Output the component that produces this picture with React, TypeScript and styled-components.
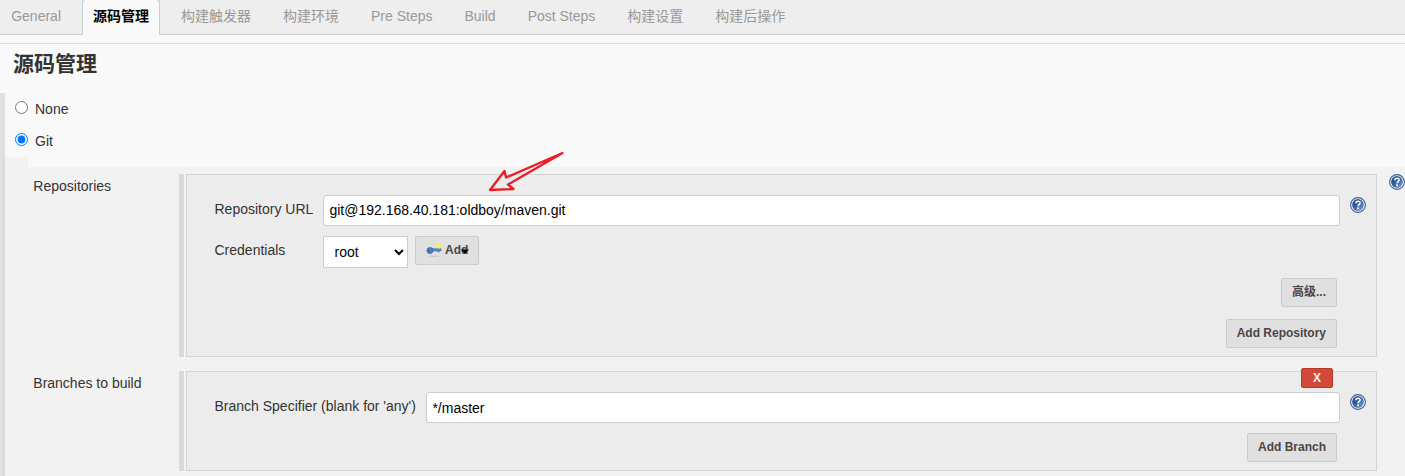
import React from "react";
import styled, { createGlobalStyle, css } from "styled-components";

const GlobalStyle = createGlobalStyle`
  *, *::before, *::after { box-sizing: border-box; }
  body {
    margin: 0;
    overflow: hidden;
    background: #f9f9f9;
    color: #333;
    font: 14px/20px "Liberation Sans", "Noto Sans CJK SC", sans-serif;
  }
`;

const Page = styled.div`
  position: relative;
  width: 1405px;
  height: 476px;
  overflow: hidden;
  display: flex;
  flex-direction: column;
`;

const TabBar = styled.nav`
  flex: none;
  display: flex;
  gap: 10px;
  height: 35px;
  padding-left: 0.2px;
  background: #eee;
  box-shadow: inset 0 -1px 0 #ccc;
`;

const Tab = styled.a<{ $active?: boolean }>`
  height: 36px;
  margin-top: -1px;
  padding: 6px 10px 0;
  border: 1px solid transparent;
  border-bottom: 0;
  border-radius: 4px 4px 0 0;
  color: #999;
  white-space: nowrap;
  ${(p) =>
    p.$active &&
    css`
      border-color: #ccc;
      background: #f9f9f9;
      color: #000;
      font-weight: bold;
    `}
`;

const Title = styled.h1`
  flex: none;
  height: 50px;
  margin: 8px 0 0;
  padding: 6px 0 0 13px;
  border-top: 1px solid #ddd;
  font-size: 21px;
  line-height: 28px;
  font-weight: bold;
`;

const Section = styled.section`
  flex: 1;
  display: flex;
  flex-direction: column;
  border-left: 5px solid #e0e0e0;
`;

const Choice = styled.label`
  display: flex;
  align-items: flex-start;
  gap: 7px;
  height: 32px;
  padding: 6px 0 0 10px;
`;

const Radio = styled.input`
  width: 13px;
  height: 13px;
  margin: 2px 0 0;
`;

const Details = styled.div`
  flex: 1;
  margin-left: -2px;
  border-left: 2px solid #d9d9d9;
  background: #f2f2f2;
`;

const Spacer = styled.div`
  height: 10px;
  margin-left: 23px;
  background: #f9f9f9;
`;

const Setting = styled.div`
  display: flex;
  align-items: flex-start;
  margin-top: 7px;
  & + & { margin-top: 14px; }
`;

const SettingName = styled.div`
  width: 174px;
  padding: 2px 0 0 28.3px;
`;

const Handle = styled.div`
  align-self: stretch;
  width: 5px;
  margin-right: 2px;
  background: #d9d9d9;
`;

const Panel = styled.div<{ $height: number }>`
  position: relative;
  width: 1191px;
  height: ${(p) => p.$height}px;
  padding: 20px 10px 0 27.5px;
  border: 1px solid #d4d4d4;
  background: #ececec;
`;

const Field = styled.div`
  display: flex;
  align-items: flex-start;
  height: 41px;
`;

const Label = styled.label<{ $width: number }>`
  flex: none;
  width: ${(p) => p.$width}px;
  padding-top: 4px;
  white-space: nowrap;
`;

const TextInput = styled.input<{ $raised?: boolean }>`
  flex: 1;
  min-width: 0;
  height: 31px;
  padding: 0 5.4px ${(p) => (p.$raised ? 2 : 0)}px;
  border: 1px solid #ccc;
  border-radius: 3px;
  background: #fff;
  color: #000;
  font: inherit;
`;

const Select = styled.select`
  width: 85px;
  height: 32px;
  margin-right: 7px;
  padding: 0 0 0 6.6px;
  border: 1px solid #ccc;
  border-radius: 0;
  background: #fff;
  color: #000;
  font: inherit;
`;

const Button = styled.button`
  position: relative;
  display: flex;
  align-items: center;
  height: 29px;
  padding: 0 10px 1px;
  border: 1px solid #ccc;
  border-radius: 2px;
  background: #e0e0e0;
  color: #4d4545;
  font: bold 12px/16px "Liberation Sans", "Noto Sans CJK SC", sans-serif;
  white-space: nowrap;
`;

const ActionList = styled.div<{ $offset?: number }>`
  padding-top: ${(p) => p.$offset ?? 0}px;
`;

const Actions = styled.div`
  display: flex;
  justify-content: flex-end;
  height: 41px;
  padding-right: 29px;
`;

const DeleteButton = styled.button`
  position: absolute;
  top: -4px;
  right: 43px;
  width: 32px;
  height: 20px;
  padding: 0;
  border: 1px solid #b83a2b;
  border-radius: 2px;
  background: #d24939;
  color: #f4eeee;
  font: bold 12px/16px "Liberation Sans", sans-serif;
`;

const HelpSvg = styled.svg`
  flex: none;
  display: block;
`;

const FieldHelp = styled.div`
  margin: 2px 0 0 10px;
`;

const SettingHelp = styled.div`
  margin-left: 12px;
`;

const KeySvg = styled.svg`
  display: block;
  margin-right: 3px;
`;

const Caret = styled.svg`
  position: absolute;
  left: 45px;
  top: 11px;
`;

const Pointer = styled.svg`
  position: absolute;
  left: 480px;
  top: 145px;
  pointer-events: none;
`;

const Help = () => (
  <HelpSvg width="16" height="16" viewBox="0 0 16 16">
    <defs>
      <linearGradient id="helpFill" x1="0" y1="0" x2="1" y2="1">
        <stop offset="0.1" stopColor="#1c4484" />
        <stop offset="0.5" stopColor="#3c66a2" />
        <stop offset="1" stopColor="#86a8d0" />
      </linearGradient>
    </defs>
    <circle cx="8" cy="8" r="7.4" fill="#fff" stroke="#345d99" strokeWidth="1.1" />
    <circle cx="8" cy="8" r="5.9" fill="url(#helpFill)" />
    <path d="M5.900 6.200C5.900 3.500 10.200 3.600 10.100 5.900C10 7.400 8.100 7.500 8.100 9.300" fill="none" stroke="#fff" strokeWidth="1.5" />
    <rect x="7.200" y="10.400" width="1.800" height="1.800" fill="#fff" />
  </HelpSvg>
);

const KeyIcon = () => (
  <KeySvg width="16" height="16" viewBox="0 0 16 16">
    <ellipse cx="8" cy="14.300" rx="5.500" ry="0.700" fill="#cccccc" />
    <path d="M6 6.700H15V8.800H13.500V9.800H11.500V9H6Z" fill="#5b89c0" stroke="#426ea8" strokeWidth="0.6" />
    <circle cx="4" cy="8.500" r="3.100" fill="#4f7fb9" stroke="#3f689f" strokeWidth="0.7" />
    <circle cx="2.600" cy="8.500" r="0.700" fill="#2f5182" />
    <circle cx="12.600" cy="4" r="2.500" fill="#f7ed45" />
    <circle cx="12.600" cy="4" r="0.900" fill="#fffbc0" />
  </KeySvg>
);

const tabs = ["General", "源码管理", "构建触发器", "构建环境", "Pre Steps", "Build", "Post Steps", "构建设置", "构建后操作"];

export default function App() {
  return (
    <Page>
      <GlobalStyle />
      <TabBar>
        {tabs.map((name) => (
          <Tab key={name} $active={name === "源码管理"}>{name}</Tab>
        ))}
      </TabBar>
      <Title>源码管理</Title>
      <Section>
        <Choice><Radio type="radio" name="scm" />None</Choice>
        <Choice><Radio type="radio" name="scm" defaultChecked />Git</Choice>
        <Details>
          <Spacer />
          <Setting>
            <SettingName>Repositories</SettingName>
            <Handle />
            <Panel $height={183}>
              <Field>
                <Label $width={108.5}>Repository URL</Label>
                <TextInput $raised defaultValue="git@192.168.40.181:oldboy/maven.git" />
                <FieldHelp><Help /></FieldHelp>
              </Field>
              <Field>
                <Label $width={108.5}>Credentials</Label>
                <Select defaultValue="root"><option>root</option></Select>
                <Button>
                  <KeyIcon />Add
                  <Caret width="8" height="6" viewBox="0 0 8 6">
                    <path d="M0 1.500H8L4 5.800Z" fill="#000" />
                  </Caret>
                </Button>
              </Field>
              <ActionList $offset={1}>
                <Actions><Button>高级...</Button></Actions>
                <Actions><Button>Add Repository</Button></Actions>
              </ActionList>
            </Panel>
            <SettingHelp><Help /></SettingHelp>
          </Setting>
          <Setting>
            <SettingName>Branches to build</SettingName>
            <Handle />
            <Panel $height={100}>
              <DeleteButton>X</DeleteButton>
              <Field>
                <Label $width={211.5}>Branch Specifier (blank for 'any')</Label>
                <TextInput defaultValue="*/master" />
                <FieldHelp><Help /></FieldHelp>
              </Field>
              <ActionList>
                <Actions><Button>Add Branch</Button></Actions>
              </ActionList>
            </Panel>
          </Setting>
        </Details>
      </Section>
      <Pointer width="90" height="55" viewBox="0 0 90 55">
        <path
          d="M82.500 8L26 32.500L24.500 26L10 45L33.500 44L28 39.500Z"
          fill="none"
          stroke="#ed1c24"
          strokeWidth="2.3"
          strokeLinejoin="round"
        />
      </Pointer>
    </Page>
  );
}
